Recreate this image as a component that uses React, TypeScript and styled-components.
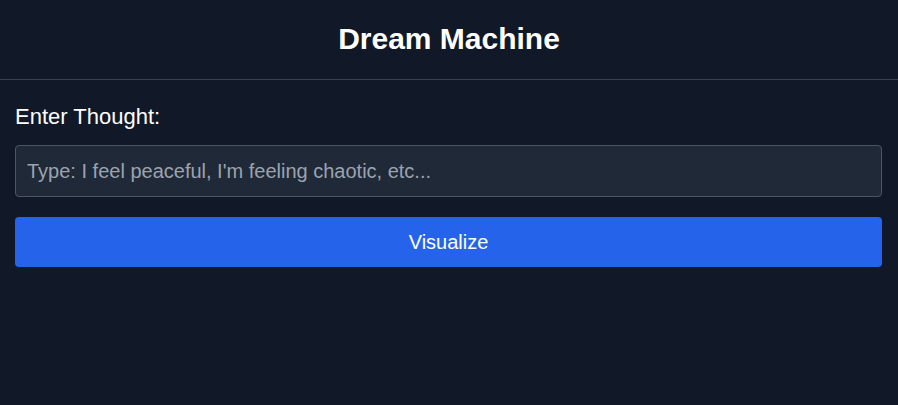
import React from "react";
import styled, { createGlobalStyle } from "styled-components";

const GlobalStyle = createGlobalStyle`
  html, body {
    margin: 0;
    padding: 0;
    background: #111827;
  }
  body {
    font-family: "Liberation Sans", Arial, sans-serif;
    color: #ffffff;
  }
  * { box-sizing: border-box; }
`;

const Page = styled.div`
  min-height: 405px;
  background: #111827;
  display: flex;
  flex-direction: column;
`;

const Header = styled.header`
  height: 80px;
  padding-bottom: 1px;
  border-bottom: 1px solid #374151;
  display: flex;
  align-items: center;
  justify-content: center;
`;

const Title = styled.h1`
  margin: 0;
  font-size: 30px;
  line-height: 36px;
  font-weight: 700;
  color: #ffffff;
`;

const Main = styled.main`
  padding: 24px 16px 16px 15px;
  display: flex;
  flex-direction: column;
`;

const Label = styled.label`
  font-size: 22px;
  line-height: 25px;
  color: #ffffff;
  margin-bottom: 16px;
`;

const Input = styled.input`
  height: 52px;
  width: 100%;
  background: #1f2937;
  border: 1px solid #4b5563;
  border-radius: 4px;
  padding: 0 11px;
  font-family: "Liberation Sans", Arial, sans-serif;
  font-size: 20px;
  color: #ffffff;
  outline: none;
  margin-bottom: 20px;
  &::placeholder {
    color: #9ca3af;
  }
`;

const Button = styled.button`
  height: 50px;
  width: 100%;
  background: #2563eb;
  border: none;
  border-radius: 4px;
  font-family: "Liberation Sans", Arial, sans-serif;
  font-size: 20px;
  color: #ffffff;
  cursor: pointer;
`;

export default function App() {
  return (
    <Page>
      <GlobalStyle />
      <Header>
        <Title>Dream Machine</Title>
      </Header>
      <Main>
        <Label htmlFor="thought">Enter Thought:</Label>
        <Input
          id="thought"
          type="text"
          placeholder="Type: I feel peaceful, I'm feeling chaotic, etc..."
        />
        <Button type="button">Visualize</Button>
      </Main>
    </Page>
  );
}
